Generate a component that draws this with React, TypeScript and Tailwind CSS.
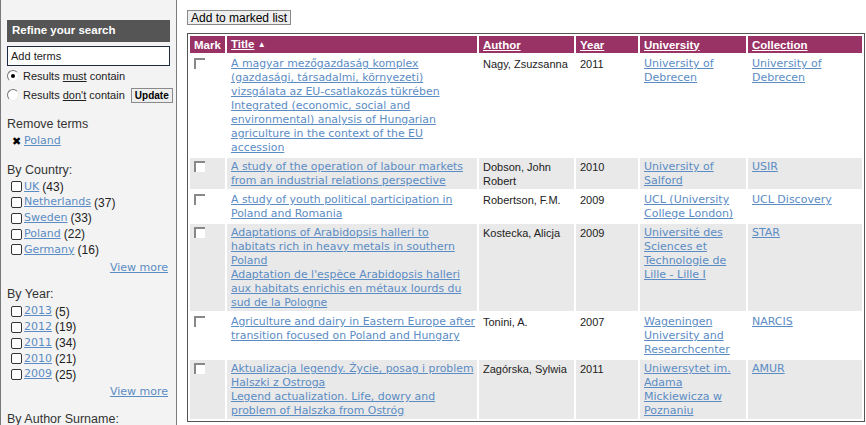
import React from 'react';

type Row = {
  title: string[][];
  author: string;
  year: string;
  university: string;
  collection: string;
};

// titles are kept as the lines they wrap to in the listing
const rows: Row[] = [
  {
    title: [
      ['A magyar mezőgazdaság komplex', '(gazdasági, társadalmi, környezeti)', 'vizsgálata az EU-csatlakozás tükrében'],
      [
        'Integrated (economic, social and',
        'environmental) analysis of Hungarian',
        'agriculture in the context of the EU',
        'accession',
      ],
    ],
    author: 'Nagy, Zsuzsanna',
    year: '2011',
    university: 'University of Debrecen',
    collection: 'University of Debrecen',
  },
  {
    title: [['A study of the operation of labour markets', 'from an industrial relations perspective']],
    author: 'Dobson, John Robert',
    year: '2010',
    university: 'University of Salford',
    collection: 'USIR',
  },
  {
    title: [['A study of youth political participation in', 'Poland and Romania']],
    author: 'Robertson, F.M.',
    year: '2009',
    university: 'UCL (University College London)',
    collection: 'UCL Discovery',
  },
  {
    title: [
      ['Adaptations of Arabidopsis halleri to', 'habitats rich in heavy metals in southern', 'Poland'],
      ["Adaptation de l'espèce Arabidopsis halleri", 'aux habitats enrichis en métaux lourds du', 'sud de la Pologne'],
    ],
    author: 'Kostecka, Alicja',
    year: '2009',
    university: 'Université des Sciences et Technologie de Lille - Lille I',
    collection: 'STAR',
  },
  {
    title: [['Agriculture and dairy in Eastern Europe after', 'transition focused on Poland and Hungary']],
    author: 'Tonini, A.',
    year: '2007',
    university: 'Wageningen University and Researchcenter',
    collection: 'NARCIS',
  },
  {
    title: [
      ['Aktualizacja legendy. Życie, posag i problem', 'Halszki z Ostroga'],
      ['Legend actualization. Life, dowry and', 'problem of Halszka from Ostróg'],
    ],
    author: 'Zagórska, Sylwia',
    year: '2011',
    university: 'Uniwersytet im. Adama Mickiewicza w Poznaniu',
    collection: 'AMUR',
  },
];

const countries = [
  ['UK', '43'],
  ['Netherlands', '37'],
  ['Sweden', '33'],
  ['Poland', '22'],
  ['Germany', '16'],
];

const years = [
  ['2013', '5'],
  ['2012', '19'],
  ['2011', '34'],
  ['2010', '21'],
  ['2009', '25'],
];

// links are set in a Verdana-like face, plain text in Arial
const verdana = "font-['DejaVu_Sans',Verdana,sans-serif]";
const link = `${verdana} text-[11px] text-[#5b8cc4] underline`;
const cellLink = 'text-[#5b8cc4] underline';

function FacetList({ items }: { items: string[][] }) {
  return (
    <div className="pl-[4px] mt-[1px]">
      {items.map(([name, count]) => (
        <div key={name} className="flex items-center h-[15.75px] text-[12px]">
          <span className="w-[11px] h-[11px] border border-[#333] rounded-[2px] bg-white mr-[2px] shrink-0" />
          <a className={link}>{name}</a>
          <span className="text-[#222] ml-[3px]">({count})</span>
        </div>
      ))}
      <div className="h-[16px] mt-[2px] flex items-center justify-end pr-[2px]">
        <a className={link}>View more</a>
      </div>
    </div>
  );
}

function Radio({ checked }: { checked?: boolean }) {
  return (
    <span className="relative w-[12px] h-[12px] rounded-full border border-t-[#777] border-l-[#777] border-b-[#eee] border-r-[#eee] bg-white mr-[4px] shrink-0">
      {checked && <span className="absolute left-[3px] top-[3px] w-[4px] h-[4px] rounded-full bg-black" />}
    </span>
  );
}

function MarkBox() {
  return <span className="block w-[11px] h-[11px] border-t-2 border-l-2 border-[#888] bg-white mt-[1px]" />;
}

export default function App() {
  return (
    <div className="flex h-[425px] w-[866px] overflow-hidden bg-white font-['Liberation_Sans',Arial,sans-serif] text-[#222]">
      <aside className="w-[177px] shrink-0 bg-[#f3f3f3] border-x border-[#7a7a7a] px-[6px] pt-[20px]">
        <div className="h-[22px] bg-[#555] text-white font-bold text-[11.5px] flex items-center pl-[5px]">
          Refine your search
        </div>
        <div className="mt-[4px] h-[20px] border border-[#1c2b44] bg-white text-[11px] flex items-center pl-[3px]">
          Add terms
        </div>
        <div className="flex items-center text-[11px] mt-[1px] h-[18px]">
          <Radio checked />
          <span className="whitespace-nowrap">
            Results <span className="underline">must</span> contain
          </span>
        </div>
        <div className="flex items-center text-[11px] mt-[1px] h-[18px]">
          <Radio />
          <span className="whitespace-nowrap">
            Results <span className="underline">don't</span> contain
          </span>
          <span className="ml-[6px] border border-[#8a8a8a] bg-[#eee] font-bold text-[10px] px-[3px] h-[15px] flex items-center text-black shrink-0">
            Update
          </span>
        </div>
        <div className="text-[12.5px] mt-[12px] h-[16px] flex items-center text-[#333]">Remove terms</div>
        <div className="flex items-center h-[16px] pl-[5px] mt-[1px]">
          <span className="text-[11px] mr-[3px] text-black">✖</span>
          <a className={link}>Poland</a>
        </div>
        <div className="text-[12.5px] mt-[13px] h-[16px] flex items-center text-[#333]">By Country:</div>
        <FacetList items={countries} />
        <div className="text-[12.5px] mt-[11px] h-[16px] flex items-center text-[#333]">By Year:</div>
        <FacetList items={years} />
        <div className="text-[12.5px] mt-[11px] h-[16px] flex items-center text-[#333]">By Author Surname:</div>
      </aside>

      <main className="flex-1 pl-[10px] pt-[10px] min-w-0">
        <div className="w-fit h-[15px] border border-[#888] bg-[#eee] text-[12px] text-black px-[3px] flex items-center">
          Add to marked list
        </div>
        <table className="mt-[8px] table-fixed border-separate border-spacing-[2px] border border-[#555] w-[678px] text-[11px] leading-[14px]">
          <colgroup>
            <col className="w-[35px]" />
            <col className="w-[250px]" />
            <col className="w-[95px]" />
            <col className="w-[62px]" />
            <col className="w-[106px]" />
            <col className="w-[114px]" />
          </colgroup>
          <thead>
            <tr className="bg-[#993366] text-white font-bold text-left text-[11.5px]">
              <th className="pl-[4px] py-[1px]">Mark</th>
              <th className="pl-[4px] py-[1px]">
                <span className="underline">Title</span> <span className="text-[8px] align-[1px]">▲</span>
              </th>
              <th className="pl-[4px] py-[1px]">
                <span className="underline">Author</span>
              </th>
              <th className="pl-[4px] py-[1px]">
                <span className="underline">Year</span>
              </th>
              <th className="pl-[4px] py-[1px]">
                <span className="underline">University</span>
              </th>
              <th className="pl-[4px] py-[1px]">
                <span className="underline">Collection</span>
              </th>
            </tr>
          </thead>
          <tbody>
            {rows.map((r, i) => (
              <tr key={i} className={`align-top ${i % 2 ? 'bg-[#e9e9e9]' : 'bg-white'}`}>
                <td className="pl-[4px] pt-[2px] pb-[1px]">
                  <MarkBox />
                </td>
                <td className={`${verdana} text-[10.9px] whitespace-nowrap pl-[4px] pr-[2px] pt-[2px] pb-[1px]`}>
                  {r.title.map(lines => (
                    <div key={lines[0]}>
                      <a className={cellLink}>
                        {lines.map((l, j) => (
                          <React.Fragment key={j}>
                            {j > 0 && <br />}
                            {l}
                          </React.Fragment>
                        ))}
                      </a>
                    </div>
                  ))}
                </td>
                <td className="pl-[4px] pr-[2px] pt-[2px] pb-[1px] text-[#222]">{r.author}</td>
                <td className="pl-[4px] pt-[2px] pb-[1px] text-[#222]">{r.year}</td>
                <td className={`${verdana} pl-[4px] pr-[2px] pt-[2px] pb-[1px]`}>
                  <a className={cellLink}>{r.university}</a>
                </td>
                <td className={`${verdana} pl-[4px] pr-[2px] pt-[2px] pb-[1px]`}>
                  <a className={cellLink}>{r.collection}</a>
                </td>
              </tr>
            ))}
          </tbody>
        </table>
      </main>
    </div>
  );
}
